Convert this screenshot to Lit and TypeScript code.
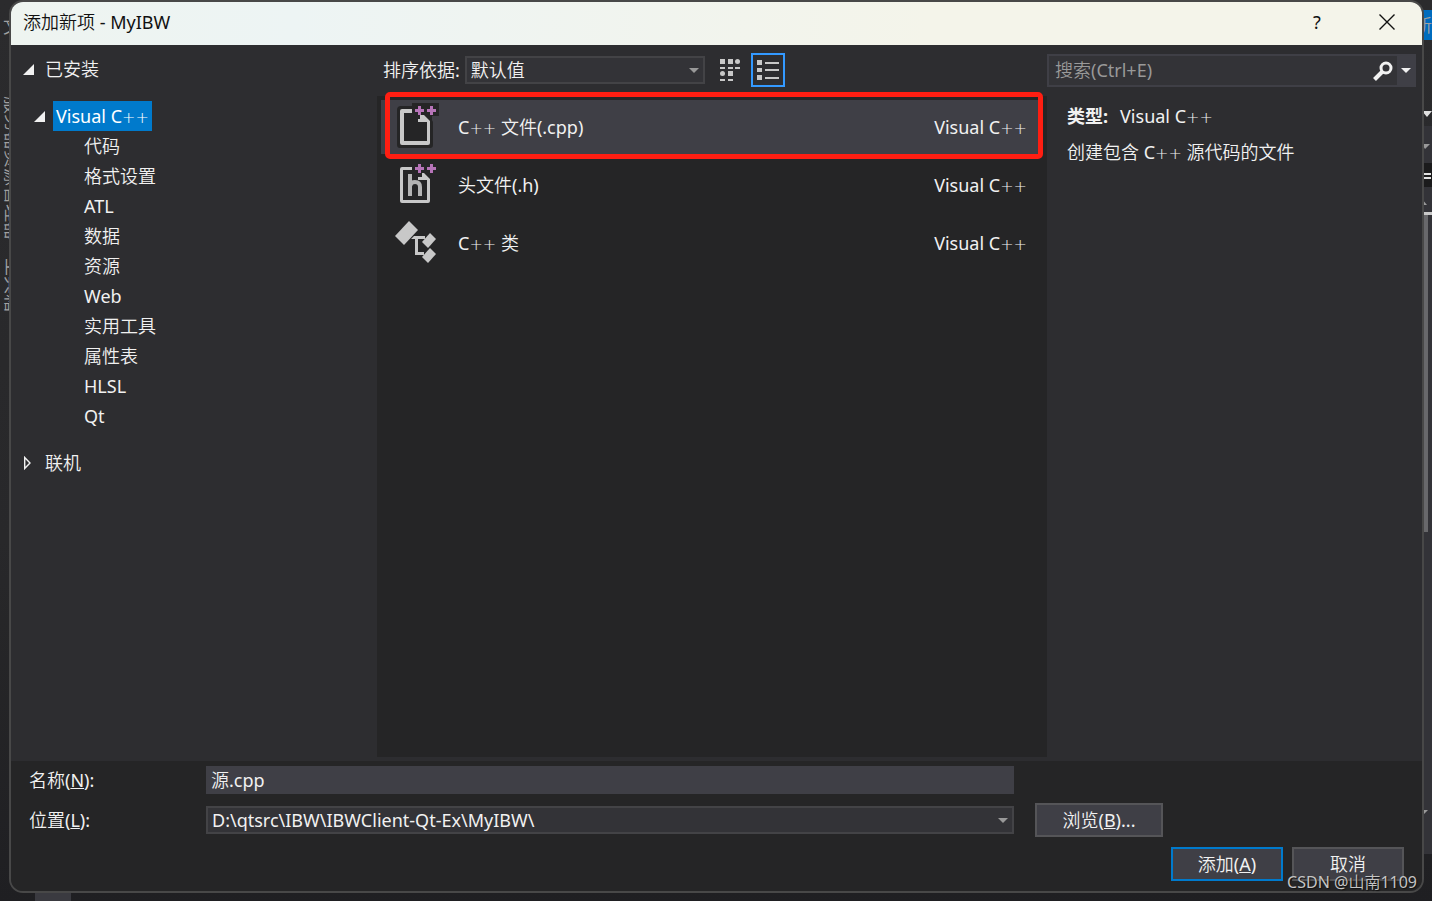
import { LitElement, html, css, svg } from "lit";
import { customElement, state } from "lit/decorators.js";

interface Template {
  icon: "cpp" | "header" | "class";
  name: string;
}

const CATEGORIES = ["代码", "格式设置", "ATL", "数据", "资源", "Web", "实用工具", "属性表", "HLSL", "Qt"];

const TEMPLATES: Template[] = [
  { icon: "cpp", name: " 文件(.cpp)" },
  { icon: "header", name: "头文件(.h)" },
  { icon: "class", name: " 类" },
];

const cpp = html`C<span class="plus">++</span>`;

const pluses = svg`
  <path fill="#b674b8" d="M24 2h3v3h3v3h-3v3h-3V8h-3V5h3zM36 2h3v3h3v3h-3v3h-3V8h-3V5h3z"/>`;

const page = svg`
  <path fill="#c8c8c8" d="M8 5H18V9H10V37H33V18H24V15H26V11H30L36 17V39Q36 41 34 41H8Q6 41 6 39V7Q6 5 8 5Z"/>`;

const thinPage = svg`
  <path fill="#c8c8c8" d="M8 5H18V8H9V38H33V18H24V15H28V11H30L36 17V39Q36 41 34 41H8Q6 41 6 39V7Q6 5 8 5Z"/>`;

const ICONS = {
  cpp: svg`
    <path fill="#252526" d="M7 2H18V-1H45V12H38V16L39 18V41Q39 44 36 44H6Q3 44 3 41V6Q3 2 7 2Z"/>
    ${page}${pluses}`,
  header: svg`
    ${thinPage}
    <path fill="none" stroke="#b4b4b4" stroke-width="4" d="M16 12V34M16 24Q17 20 21 20Q26 20 26 25V34"/>
    ${pluses}`,
  class: svg`
    <g fill="#c8c8c8">
      <path d="M15 1L24 10L10 25L1 16Z"/>
      <path d="M36 13L42 19L34 28L28 22Z"/>
      <path d="M36 28L42 34L34 43L28 37Z"/>
      <path d="M20 16H31V19H24V32H30V35H21V19H17Z"/>
    </g>`,
};

@customElement("app-root")
export class AppRoot extends LitElement {
  static styles = css`
    :host {
      display: block;
      position: relative;
      height: 100vh;
      box-sizing: border-box;
      padding: 0 8px 8px 9px;
      overflow: hidden;
      background: linear-gradient(#2b2b2d 0, #28282a 60%, #1f1f22 100%);
      color: #f1f1f1;
      font: 18px/30px "Noto Sans", "Noto Sans CJK SC DemiLight", "Noto Sans CJK SC Light", "Noto Sans CJK SC", sans-serif;
    }
    * { box-sizing: border-box; }
    button, input, select { font: inherit; color: inherit; border-radius: 0; margin: 0; }
    button { padding: 0; cursor: pointer; }
    svg { display: block; flex: none; }
    ul { list-style: none; margin: 0; padding: 0; }
    .plus { font-family: "DejaVu Sans", sans-serif; font-size: 16px; font-weight: 200; line-height: 16px; }

    .behind { position: absolute; inset: 0; overflow: hidden; color: #a0a0a0; }
    .behind > * { position: absolute; }
    .menu { left: 3px; top: 11px; }
    .side { left: 4px; top: 96px; writing-mode: vertical-rl; text-orientation: sideways; line-height: 18px; }
    .update { right: 0; top: 10px; width: 16px; height: 30px; background: #006cbe; direction: rtl; }
    .right-pane { right: 0; top: 126px; width: 10px; height: 728px; background: #333338; }
    .right-line { right: 0; top: 212px; width: 10px; height: 3px; background: #c8c8c8; }
    .right-dark { right: 0; top: 163px; width: 10px; height: 24px; background: #1b1b1c; }
    .right-thumb { right: 4px; top: 215px; width: 5px; height: 317px; background: #68686b; }
    .right-marks { right: 0; top: 108px; }
    .task { left: 35px; bottom: 0; width: 36px; height: 8px; background: #3a3a40; }

    .dialog {
      position: relative;
      height: 100%;
      display: flex;
      flex-direction: column;
      border: 2px solid #484848;
      border-radius: 14px;
      overflow: hidden;
      background: #2d2d30;
    }
    .titlebar {
      display: flex;
      flex: none;
      height: 43px;
      padding-left: 12px;
      color: #111;
      background: linear-gradient(90deg, #eef4f0, #edf4f4 20%, #f4f4ea 65%, #f4f4ea);
    }
    .titlebar h1 { flex: 1; margin: 0; font-size: 18px; line-height: 40px; font-weight: inherit; }
    .titlebar button { width: 70px; height: 40px; border: 0; background: none; display: grid; place-items: center; }

    .body { flex: 1; min-height: 0; display: grid; grid-template-columns: 366fr 670fr 375fr; }
    .tree { padding: 9px 0 0 12px; }
    .node { display: flex; align-items: center; gap: 10px; height: 30px; }
    .root { margin-bottom: 17px; }
    .lang { padding-left: 11px; gap: 7px; }
    .lang > span { background: #007acc; color: #fff; padding: 0 3px; }
    .leaves li { padding-left: 61px; height: 30px; }
    .online { margin-top: 17px; }

    .middle { display: flex; flex-direction: column; min-width: 0; padding-bottom: 4px; }
    .toolbar { display: flex; align-items: center; height: 51px; padding: 0 0 1px 6px; }
    .toolbar label { margin-right: 5px; }
    .pick { display: grid; align-items: center; }
    .pick > * { grid-area: 1 / 1; }
    .pick svg { justify-self: end; margin-right: 6px; pointer-events: none; }
    select {
      appearance: none;
      width: 100%;
      height: 28px;
      padding: 0 24px 0 4px;
      border: 2px solid #434346;
      background: #333337;
      line-height: 24px;
    }
    .sort { width: 240px; margin-right: 8px; }
    .view { width: 34px; height: 34px; border: 2px solid transparent; background: none; display: grid; place-items: center; }
    .view + .view { margin-left: 4px; }
    .view[aria-pressed="true"] { border-color: #3399ff; }
    .list { position: relative; flex: 1; padding: 4px; background: #252526; display: flex; flex-direction: column; gap: 4px; }
    .item {
      display: flex;
      align-items: center;
      width: 100%;
      height: 54px;
      padding: 0 16px 0 13px;
      border: 0;
      background: none;
      text-align: left;
    }
    .item svg { margin-right: 18px; overflow: visible; }
    .item .name { flex: 1; white-space: pre; }
    .item[aria-selected="true"] { background: #3f3f46; }
    .marker {
      position: absolute;
      left: 8px;
      right: 4px;
      top: -4px;
      height: 67px;
      border: 5px solid #ff1e12;
      border-radius: 5px;
      pointer-events: none;
    }

    .info { min-width: 0; padding: 9px 6px 0 0; }
    .search { display: flex; height: 33px; border: 2px solid #3f3f46; background: #333337; }
    .search input { flex: 1; min-width: 0; border: 0; padding: 0 6px 2px; background: none; outline: none; }
    .search input::placeholder { color: #999; opacity: 1; }
    .search button { border: 0; background: none; display: grid; place-items: center; width: 28px; }
    .search .more { width: 17px; background: #3f3f46; }
    .desc { padding: 14px 20px; }
    .desc p { margin: 0 0 6px; }
    .desc b { margin-right: 12px; font-weight: 700; font-family: "Noto Sans", "Noto Sans CJK SC", sans-serif; }

    .footer { flex: none; height: 130px; padding: 4px 18px 0; background: #252526; }
    .fields { display: grid; grid-template-columns: 177px minmax(0, 808fr) 390fr; row-gap: 8px; align-items: center; }
    .name-box { width: 100%; height: 28px; border: 0; padding: 0 5px; background: #3f3f46; }
    .push { height: 34px; border: 2px solid #555558; background: #3f3f46; }
    .browse { width: 128px; margin-left: 21px; }
    .actions { display: flex; justify-content: flex-end; gap: 9px; margin-top: 10px; }
    .actions .push { width: 112px; }
    .push.default { border-color: #007acc; }
    .watermark {
      position: absolute;
      right: 15px;
      bottom: 7px;
      font-size: 16px;
      line-height: 24px;
      color: #c4c4c4;
      text-shadow: 1px 1px 1px #111;
      pointer-events: none;
    }
  `;

  @state() private selected = 0;
  @state() private listView = true;

  private arrow(color = "#999") {
    return html`<svg width="10" height="5" viewBox="0 0 10 5" aria-hidden="true"><path fill=${color} d="M0 0H10L5 5Z"/></svg>`;
  }

  private expanded() {
    return html`<svg width="12" height="12" viewBox="0 0 12 12" aria-hidden="true"><path fill="#f1f1f1" d="M11 1V12H0Z"/></svg>`;
  }

  render() {
    return html`
      <div class="behind" aria-hidden="true">
        <span class="menu">文</span>
        <span class="side">服务器资源管理器　工具箱</span>
        <span class="right-pane"></span>
        <span class="update">新</span>
        <span class="right-dark"></span>
        <span class="right-line"></span>
        <span class="right-thumb"></span>
        <svg class="right-marks" width="10" height="720" viewBox="0 0 10 720">
          <path fill="#e0e0e0" d="M0 3H10L5 9ZM0 65H9V67H0ZM0 69H9V71H0Z"/>
          <path fill="#999" d="M0 36H8L3 41ZM0 91L5 97H0ZM0 702H6L1 707Z"/>
        </svg>
        <span class="task"></span>
      </div>

      <main class="dialog">
        <header class="titlebar">
          <h1>添加新项 - MyIBW</h1>
          <button aria-label="帮助">?</button>
          <button aria-label="关闭">
            <svg width="16" height="16" viewBox="0 0 16 16"><path stroke="#111" stroke-width="1.4" d="M.5 .5L15.5 15.5M15.5 .5L.5 15.5"/></svg>
          </button>
        </header>

        <div class="body">
          <nav class="tree">
            <div class="node root">${this.expanded()}<span>已安装</span></div>
            <div class="node lang">${this.expanded()}<span>Visual ${cpp}</span></div>
            <ul class="leaves">${CATEGORIES.map((c) => html`<li>${c}</li>`)}</ul>
            <div class="node online">
              <svg width="12" height="14" viewBox="0 0 12 14" aria-hidden="true"><path fill="none" stroke="#f1f1f1" stroke-width="1.4" d="M1.700 1.500V12.500L7 7Z"/></svg>
              <span>联机</span>
            </div>
          </nav>

          <section class="middle">
            <div class="toolbar">
              <label for="sort">排序依据:</label>
              <div class="pick sort">
                <select id="sort"><option>默认值</option></select>
                ${this.arrow()}
              </div>
              <button class="view" aria-label="小图标" aria-pressed=${!this.listView} @click=${() => (this.listView = false)}>
                <svg width="20" height="22" viewBox="0 0 20 22">
                  <path fill="#c8c8c8" d="M0 0h5v5H0zM8 0h5v5H8zM8 12h5v5H8zM0 8h5v2H0zM8 8h5v2H8zM15 8h5v2H15zM0 20h5v2H0zM8 20h5v2H8z"/>
                  <circle fill="#c8c8c8" cx="17.500" cy="2.500" r="2.500"/><circle fill="#c8c8c8" cx="2.500" cy="14.500" r="2.500"/>
                </svg>
              </button>
              <button class="view" aria-label="列表" aria-pressed=${this.listView} @click=${() => (this.listView = true)}>
                <svg width="22" height="20" viewBox="0 0 22 20">
                  <path fill="#c8c8c8" d="M0 0h5v5H0zM0 8h5v4H0zM0 15h5v5H0zM8 2h14v2H8zM8 9h14v2H8zM8 17h14v2H8z"/>
                </svg>
              </button>
            </div>
            <div class="list" role="listbox" aria-label="模板">
              ${TEMPLATES.map(
                (t, i) => html`
                  <button class="item" role="option" aria-selected=${i === this.selected} @click=${() => (this.selected = i)}>
                    <svg width="46" height="46" viewBox="0 0 46 46" aria-hidden="true">${ICONS[t.icon]}</svg>
                    <span class="name">${t.icon === "header" ? "" : cpp}${t.name}</span>
                    <span>Visual ${cpp}</span>
                  </button>`
              )}
              <div class="marker"></div>
            </div>
          </section>

          <aside class="info">
            <div class="search">
              <input type="text" aria-label="搜索" placeholder="搜索(Ctrl+E)" />
              <button aria-label="搜索">
                <svg width="20" height="20" viewBox="0 0 20 20"><circle cx="13" cy="7" r="5" fill="none" stroke="#f1f1f1" stroke-width="3"/><path stroke="#f1f1f1" stroke-width="4" d="M9.500 10.500L1.500 18.500"/></svg>
              </button>
              <button class="more" aria-label="搜索选项">${this.arrow("#f1f1f1")}</button>
            </div>
            <div class="desc">
              <p><b>类型:</b>Visual ${cpp}</p>
              <p>创建包含 ${cpp} 源代码的文件</p>
            </div>
          </aside>
        </div>

        <footer class="footer">
          <div class="fields">
            <label for="name">名称(<u>N</u>):</label>
            <input class="name-box" id="name" type="text" .value=${"源.cpp"} />
            <span></span>
            <label for="place">位置(<u>L</u>):</label>
            <div class="pick">
              <select id="place"><option>D:\\qtsrc\\IBW\\IBWClient-Qt-Ex\\MyIBW\\</option></select>
              ${this.arrow()}
            </div>
            <button class="push browse">浏览(<u>B</u>)...</button>
          </div>
          <div class="actions">
            <button class="push default">添加(<u>A</u>)</button>
            <button class="push">取消</button>
          </div>
        </footer>
      </main>
      <span class="watermark">CSDN @山南1109</span>
    `;
  }
}
